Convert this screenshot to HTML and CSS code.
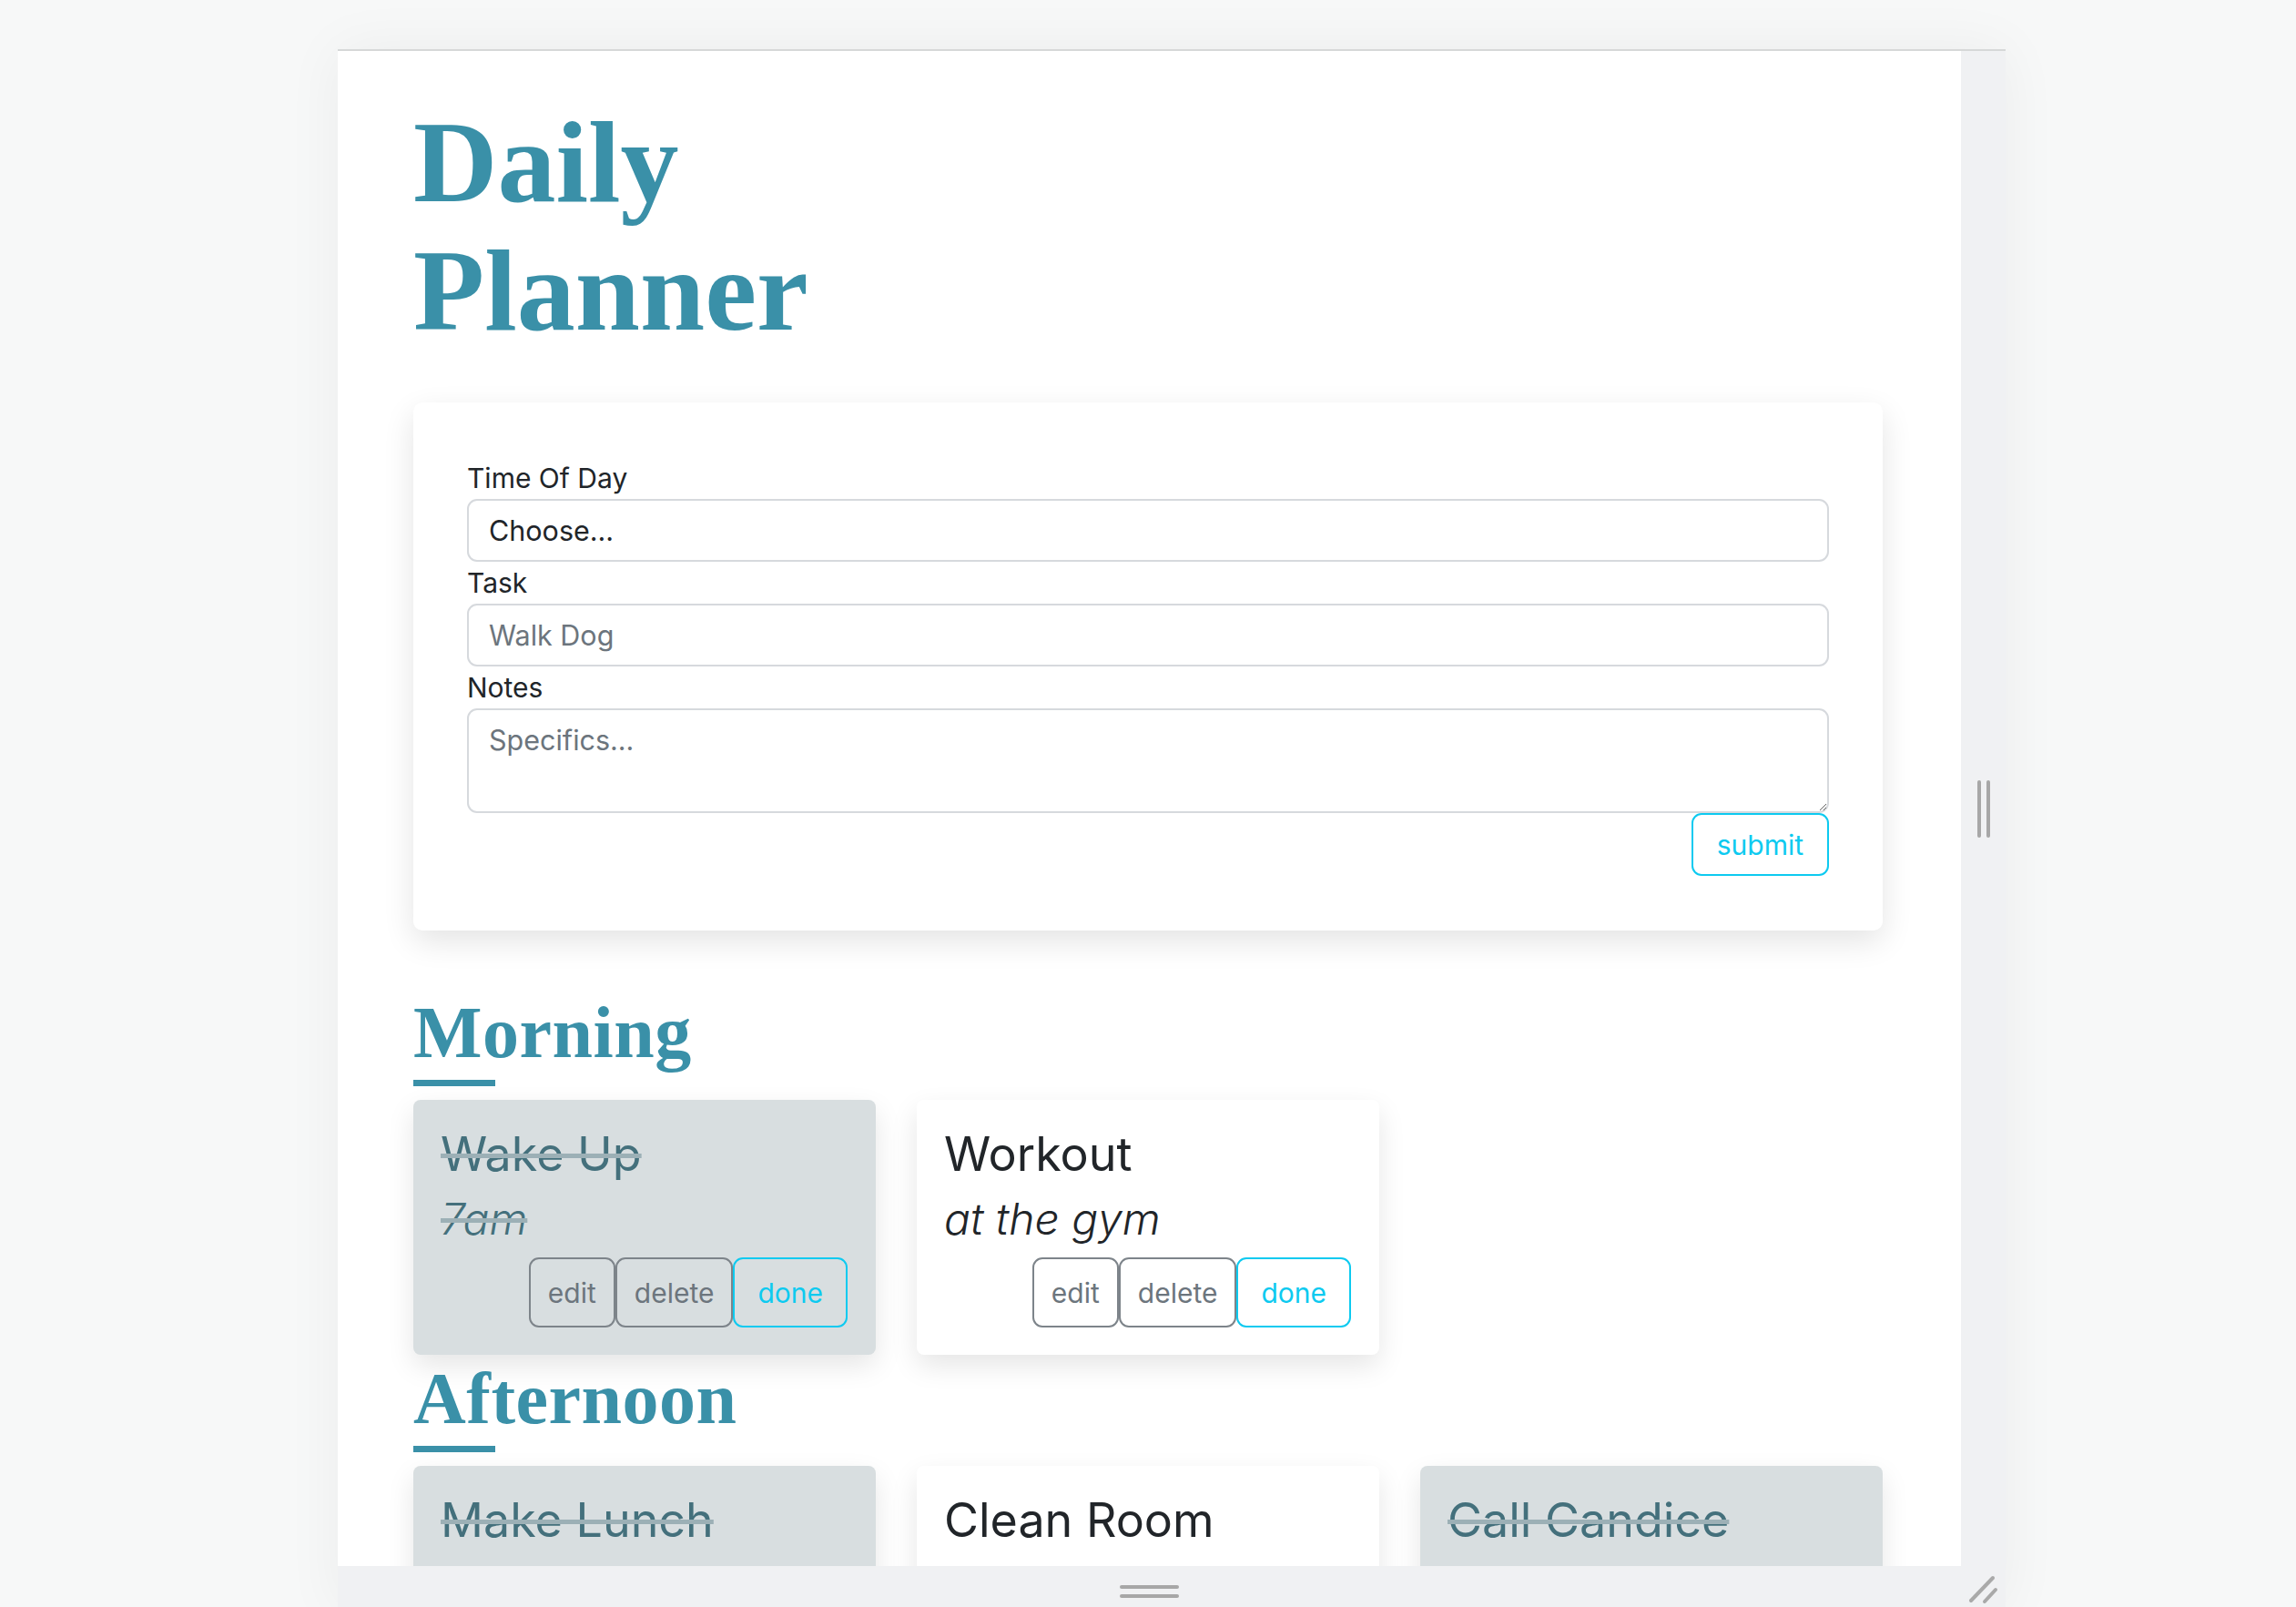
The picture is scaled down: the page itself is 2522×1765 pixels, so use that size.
FILE: index.html
```html
<!DOCTYPE html>
<html lang="en">
<head>
<meta charset="utf-8">
<title>Daily Planner</title>
<link rel="stylesheet" href="styles.css">
</head>
<body>
<div class="frame">
  <div class="viewport">
    <main class="container">
      <h1 class="title">Daily<br>Planner</h1>

      <form class="form-card">
        <label class="lbl" for="tod">Time Of Day</label>
        <select class="field" id="tod"><option>Choose...</option></select>
        <label class="lbl" for="task">Task</label>
        <input class="field" id="task" type="text" placeholder="Walk Dog">
        <label class="lbl" for="notes">Notes</label>
        <textarea class="field area" id="notes" placeholder="Specifics..."></textarea>
        <div class="actions"><button class="btn btn-info submit" type="button">submit</button></div>
      </form>

      <section class="period">
        <h2 class="period-title">Morning</h2>
        <div class="rule"></div>
        <div class="cards">
          <div class="task done">
            <h3 class="task-title">Wake Up</h3>
            <p class="task-note">7am</p>
            <div class="btn-row"><button class="btn btn-sec" type="button">edit</button><button class="btn btn-sec" type="button">delete</button><button class="btn btn-info" type="button">done</button></div>
          </div>
          <div class="task">
            <h3 class="task-title">Workout</h3>
            <p class="task-note">at the gym</p>
            <div class="btn-row"><button class="btn btn-sec" type="button">edit</button><button class="btn btn-sec" type="button">delete</button><button class="btn btn-info" type="button">done</button></div>
          </div>
        </div>
      </section>

      <section class="period">
        <h2 class="period-title">Afternoon</h2>
        <div class="rule"></div>
        <div class="cards">
          <div class="task done">
            <h3 class="task-title">Make Lunch</h3>
            <p class="task-note">noon</p>
            <div class="btn-row"><button class="btn btn-sec" type="button">edit</button><button class="btn btn-sec" type="button">delete</button><button class="btn btn-info" type="button">done</button></div>
          </div>
          <div class="task">
            <h3 class="task-title">Clean Room</h3>
            <p class="task-note">before dinner</p>
            <div class="btn-row"><button class="btn btn-sec" type="button">edit</button><button class="btn btn-sec" type="button">delete</button><button class="btn btn-info" type="button">done</button></div>
          </div>
          <div class="task done">
            <h3 class="task-title">Call Candice</h3>
            <p class="task-note">3pm</p>
            <div class="btn-row"><button class="btn btn-sec" type="button">edit</button><button class="btn btn-sec" type="button">delete</button><button class="btn btn-info" type="button">done</button></div>
          </div>
        </div>
      </section>
    </main>
  </div>
  <div class="vbar"><span></span><span></span></div>
  <div class="hbar">
    <div class="grip"><span></span><span></span></div>
    <div class="corner">
      <svg width="49" height="49" viewBox="0 0 49 49" aria-hidden="true">
        <line x1="11" y1="38" x2="35" y2="13" stroke="#a9a9a9" stroke-width="4" stroke-linecap="round"/>
        <line x1="26" y1="39" x2="38" y2="26" stroke="#a9a9a9" stroke-width="4" stroke-linecap="round"/>
      </svg>
    </div>
  </div>
</div>
</body>
</html>
```
FILE: styles.css
```css
* { box-sizing: border-box; }

html, body {
  margin: 0;
  height: 100%;
}

body {
  background: #f7f8f8;
  overflow: hidden;
  padding: 54px 0 0 371px;
  font-family: "Inter", "Open Sans", sans-serif;
  color: #212529;
}

.frame {
  width: 1832px;
  display: grid;
  grid-template-columns: 1783px 49px;
  grid-template-rows: 1664px 49px;
  border-top: 2px solid #d6d8d8;
  box-shadow: 0 0 60px rgba(0, 0, 0, 0.05);
}

.viewport {
  background: #fff;
  overflow: hidden;
}

.vbar {
  background: #f0f1f3;
  display: flex;
  align-items: center;
  justify-content: center;
  gap: 6px;
}

.vbar span {
  width: 4px;
  height: 63px;
  border-radius: 2px;
  background: #a7a7a7;
}

.hbar {
  grid-column: 1 / 3;
  background: #f0f1f3;
  display: grid;
  grid-template-columns: 1783px 49px;
}

.grip {
  display: flex;
  flex-direction: column;
  align-items: center;
  gap: 6px;
  padding-top: 21px;
}

.grip span {
  width: 65px;
  height: 4px;
  border-radius: 2px;
  background: #a7a7a7;
}

.corner svg { display: block; }

/* page content */
.container {
  padding: 0 86px 0 83px;
}

.title {
  margin: 52px 0 52px;
  font-family: "Liberation Serif", "Times New Roman", serif;
  font-weight: 700;
  font-size: 128px;
  line-height: 141px;
  color: #3a90a8;
}

.form-card {
  display: flex;
  flex-direction: column;
  padding: 60px 59px 60px 59px;
  margin-bottom: 64px;
  background: #fff;
  border-radius: 10px;
  box-shadow: 0 12px 34px rgba(0, 0, 0, 0.11);
}

.lbl {
  font-size: 30px;
  line-height: 46px;
  color: #212529;
}

.field {
  display: block;
  width: 100%;
  height: 69px;
  padding: 11px 22px;
  font-family: inherit;
  font-size: 30.5px;
  line-height: 44px;
  color: #212529;
  background: #fff;
  border: 2px solid #d6d9dd;
  border-radius: 11px;
  appearance: none;
  -webkit-appearance: none;
  outline: none;
}

.field::placeholder { color: #6c757d; }

.area {
  height: 115px;
  resize: vertical;
}

.actions {
  display: flex;
  justify-content: flex-end;
}

.btn {
  font-family: inherit;
  font-size: 30px;
  line-height: 44px;
  background: transparent;
  border: 2px solid;
  border-radius: 11px;
  cursor: pointer;
}

.btn-info {
  color: #0dcaf0;
  border-color: #0dcaf0;
}

.btn-sec {
  color: #6c757d;
  border-color: #7d848a;
}

.submit {
  height: 69px;
  padding: 0 26px;
}

/* periods */
.period-title {
  margin: 0;
  font-family: "Liberation Serif", "Times New Roman", serif;
  font-weight: 700;
  font-size: 80px;
  line-height: 96px;
  letter-spacing: 0.5px;
  color: #3a90a8;
}

.rule {
  width: 90px;
  height: 7px;
  margin-top: 4px;
  background: #3a90a8;
}

.cards {
  display: grid;
  grid-template-columns: repeat(3, 508px);
  column-gap: 45px;
  margin-top: 15px;
}

.task {
  display: flex;
  flex-direction: column;
  height: 280px;
  padding: 27px 31px 30px 30px;
  background: #fff;
  border-radius: 8px;
  box-shadow: 0 12px 30px rgba(0, 0, 0, 0.1);
}

.task-title {
  margin: 0;
  font-size: 52px;
  font-weight: 400;
  line-height: 65px;
  color: #212529;
}

.task-note {
  margin: 12px 0 0;
  font-size: 48px;
  font-style: italic;
  font-weight: 300;
  line-height: 53px;
  color: #212529;
}

.btn-row {
  display: flex;
  justify-content: flex-end;
  margin-top: 16px;
}

.btn-row .btn {
  height: 77px;
  padding: 0 19px;
}

.btn-row .btn-info {
  padding: 0 25px;
}

.task.done {
  background: #d8dee0;
}

.task.done .task-title,
.task.done .task-note {
  color: #44707c;
  text-decoration: line-through;
  text-decoration-color: #9cb0b6;
  text-decoration-thickness: 5px;
}
```
